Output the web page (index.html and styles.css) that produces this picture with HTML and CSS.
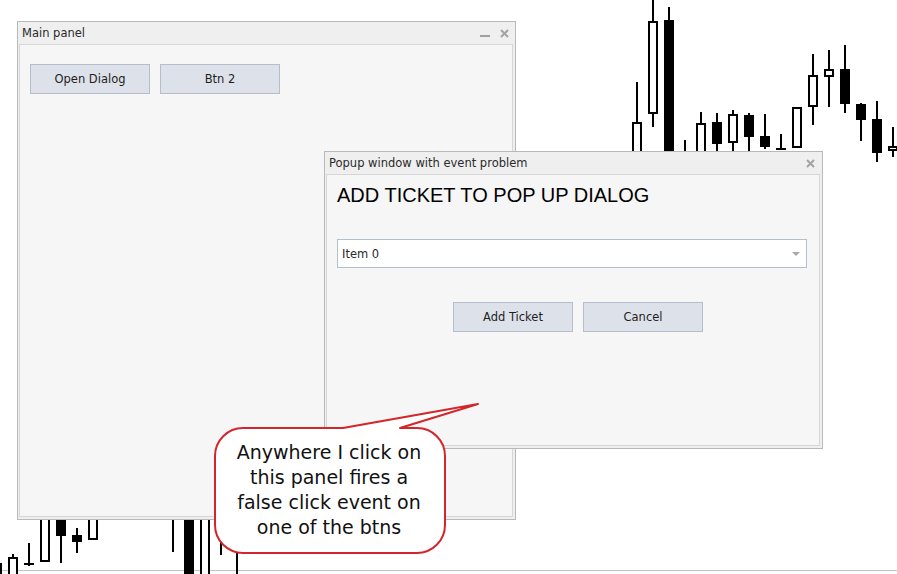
FILE: index.html
```html
<!DOCTYPE html>
<html lang="en">
<head>
    <meta charset="UTF-8" />
    <title>Popup window with event problem</title>
    <link rel="stylesheet" href="styles.css">
</head>
<body>
<div class="screen">
    <!-- price chart behind the panels -->
    <svg class="chart" width="897" height="574" viewBox="0 0 897 574">
        <rect class="axis" x="0" y="570" width="897" height="1" />
        <g class="wicks">
            <rect x="636" y="82" width="2" height="78" />
            <rect x="652" y="0" width="2" height="127" />
            <rect x="668" y="7" width="2" height="150" />
            <rect x="684" y="140" width="2" height="20" />
            <rect x="700" y="112" width="2" height="48" />
            <rect x="716" y="113" width="2" height="47" />
            <rect x="732" y="110" width="2" height="50" />
            <rect x="748" y="113" width="2" height="47" />
            <rect x="764" y="114" width="2" height="35" />
            <rect x="780" y="134" width="2" height="16" />
            <rect x="812" y="54" width="2" height="71" />
            <rect x="828" y="50" width="2" height="57" />
            <rect x="844" y="45" width="2" height="68" />
            <rect x="860" y="103" width="2" height="38" />
            <rect x="876" y="101" width="2" height="61" />
            <rect x="892" y="127" width="2" height="30" />

            <rect x="12" y="554" width="2" height="20" />
            <rect x="28" y="543" width="2" height="23" />
            <rect x="60" y="510" width="2" height="53" />
            <rect x="76" y="528" width="2" height="25" />
            <rect x="172" y="510" width="2" height="42" />
            <rect x="220" y="510" width="2" height="45" />
            <rect x="236" y="552" width="2" height="22" />
        </g>
        <g class="up">
            <rect x="633" y="123" width="8" height="40" />
            <rect x="649" y="22" width="8" height="91" />
            <rect x="697" y="124" width="8" height="40" />
            <rect x="729" y="115" width="8" height="27" />
            <rect x="793" y="108" width="8" height="39" />
            <rect x="809" y="76" width="8" height="30" />
            <rect x="825" y="70" width="8" height="6" />
            <rect x="889" y="147" width="8" height="3" />

            <rect x="-7" y="564" width="8" height="14" />
            <rect x="9" y="558" width="8" height="20" />
            <rect x="41" y="505" width="8" height="56" />
            <rect x="89" y="505" width="8" height="34" />
            <rect x="201" y="505" width="8" height="80" />
        </g>
        <g class="down">
            <rect x="664" y="20" width="10" height="140" />
            <rect x="712" y="122" width="10" height="22" />
            <rect x="744" y="115" width="10" height="22" />
            <rect x="760" y="136" width="10" height="11" />
            <rect x="776" y="148" width="10" height="2" />
            <rect x="840" y="69" width="10" height="35" />
            <rect x="856" y="104" width="10" height="16" />
            <rect x="872" y="119" width="10" height="34" />

            <rect x="24" y="563" width="10" height="2" />
            <rect x="56" y="505" width="10" height="31" />
            <rect x="72" y="535" width="10" height="7" />
            <rect x="184" y="505" width="10" height="80" />
        </g>
    </svg>

    <div class="window main-panel">
        <div class="title-bar">
            <span class="title">Main panel</span>
            <span class="win-buttons">
                <svg class="icon-min" width="10" height="2"><rect width="10" height="2" /></svg>
                <svg class="icon-close" width="9" height="9" viewBox="0 0 9 9"><path d="M1 1L8 8M8 1L1 8" /></svg>
            </span>
        </div>
        <div class="window-body">
            <div class="button-row">
                <button class="btn">Open Dialog</button>
                <button class="btn">Btn 2</button>
            </div>
        </div>
    </div>

    <div class="window popup">
        <div class="title-bar">
            <span class="title">Popup window with event problem</span>
            <span class="win-buttons">
                <svg class="icon-close" width="9" height="9" viewBox="0 0 9 9"><path d="M1 1L8 8M8 1L1 8" /></svg>
            </span>
        </div>
        <div class="window-body popup-body">
            <h1 class="heading">ADD TICKET TO POP UP DIALOG</h1>
            <div class="dropdown">
                <span>Item 0</span>
                <svg class="caret" width="8" height="4" viewBox="0 0 8 4"><path d="M0 0H8L4 4Z" /></svg>
            </div>
            <div class="dialog-buttons">
                <button class="btn">Add Ticket</button>
                <button class="btn">Cancel</button>
            </div>
        </div>
    </div>

    <div class="callout">
        <svg class="bubble" width="280" height="165" viewBox="0 0 280 165">
            <path d="M133 30 L268 6 L190 30 L207 30 A28 28 0 0 1 235 58 L235 127 A28 28 0 0 1 207 155 L33 155 A28 28 0 0 1 5 127 L5 58 A28 28 0 0 1 33 30 Z" />
        </svg>
        <p class="callout-text">Anywhere I click on this panel fires a false click event on one of the btns</p>
    </div>
</div>
</body>
</html>
```

FILE: styles.css
```css
body {
    margin: 0;
    background: #ffffff;
    font-family: "DejaVu Sans", Verdana, sans-serif;
}

.screen {
    position: relative;
    width: 897px;
    height: 574px;
    overflow: hidden;
    background: #ffffff;
}

.chart {
    position: absolute;
    top: 0;
    left: 0;
}

.axis {
    fill: #c4c4c4;
}

.wicks rect,
.down rect {
    fill: #000000;
}

.up rect {
    fill: #ffffff;
    stroke: #000000;
    stroke-width: 2;
}

/* panels */
.window {
    position: absolute;
    box-sizing: border-box;
    width: 499px;
    display: flex;
    flex-direction: column;
    background: #efefef;
    border: 1px solid #b9b9b9;
}

.main-panel {
    left: 17px;
    top: 21px;
    height: 499px;
}

.popup {
    left: 324px;
    top: 151px;
    height: 298px;
}

.title-bar {
    height: 22px;
    display: flex;
    align-items: center;
    justify-content: space-between;
    padding: 0 6px 0 4px;
    font-size: 11.5px;
    color: #2a2a2a;
}

.win-buttons {
    display: flex;
    align-items: center;
    gap: 10px;
}

.icon-min {
    margin-top: 5px;
    fill: #a0a0a0;
}

.icon-close path {
    stroke: #a3a3a3;
    stroke-width: 2;
}

.popup .win-buttons {
    margin-right: 1px;
}

.window-body {
    flex: 1;
    margin: 0 2px 2px 1px;
    border: 1px solid #d6d6d6;
    background: #f6f6f6;
}

.button-row {
    display: flex;
    gap: 10px;
    padding: 19px 10px;
}

.btn {
    box-sizing: border-box;
    width: 120px;
    height: 30px;
    padding: 0;
    background: #dde2ea;
    border: 1px solid #b6becb;
    font-family: "DejaVu Sans", Verdana, sans-serif;
    font-size: 11.5px;
    color: #1e1e1e;
}

/* popup content */
.popup-body {
    padding: 9px 0 0 10px;
}

.heading {
    margin: 0;
    font-family: "Liberation Sans", Arial, sans-serif;
    font-size: 20px;
    font-weight: normal;
    line-height: 23px;
    color: #000000;
}

.dropdown {
    box-sizing: border-box;
    width: 470px;
    height: 29px;
    margin-top: 32px;
    padding: 0 6px 0 4px;
    display: flex;
    align-items: center;
    justify-content: space-between;
    background: #ffffff;
    border: 1px solid #b3bfcc;
    font-size: 11.5px;
    color: #2a2a2a;
}

.caret {
    fill: #a8a8a8;
}

.dialog-buttons {
    display: flex;
    justify-content: center;
    gap: 10px;
    margin-top: 34px;
}

/* annotation */
.callout {
    position: absolute;
    left: 210px;
    top: 398px;
    width: 280px;
    height: 165px;
}

.bubble {
    position: absolute;
    top: 0;
    left: 0;
}

.bubble path {
    fill: #ffffff;
    stroke: #d3262b;
    stroke-width: 2;
    stroke-linejoin: round;
}

.callout-text {
    position: relative;
    box-sizing: border-box;
    width: 230px;
    margin: 42px 0 0 4px;
    padding: 0 14px;
    font-size: 19px;
    line-height: 25px;
    text-align: center;
    color: #111111;
}
```
